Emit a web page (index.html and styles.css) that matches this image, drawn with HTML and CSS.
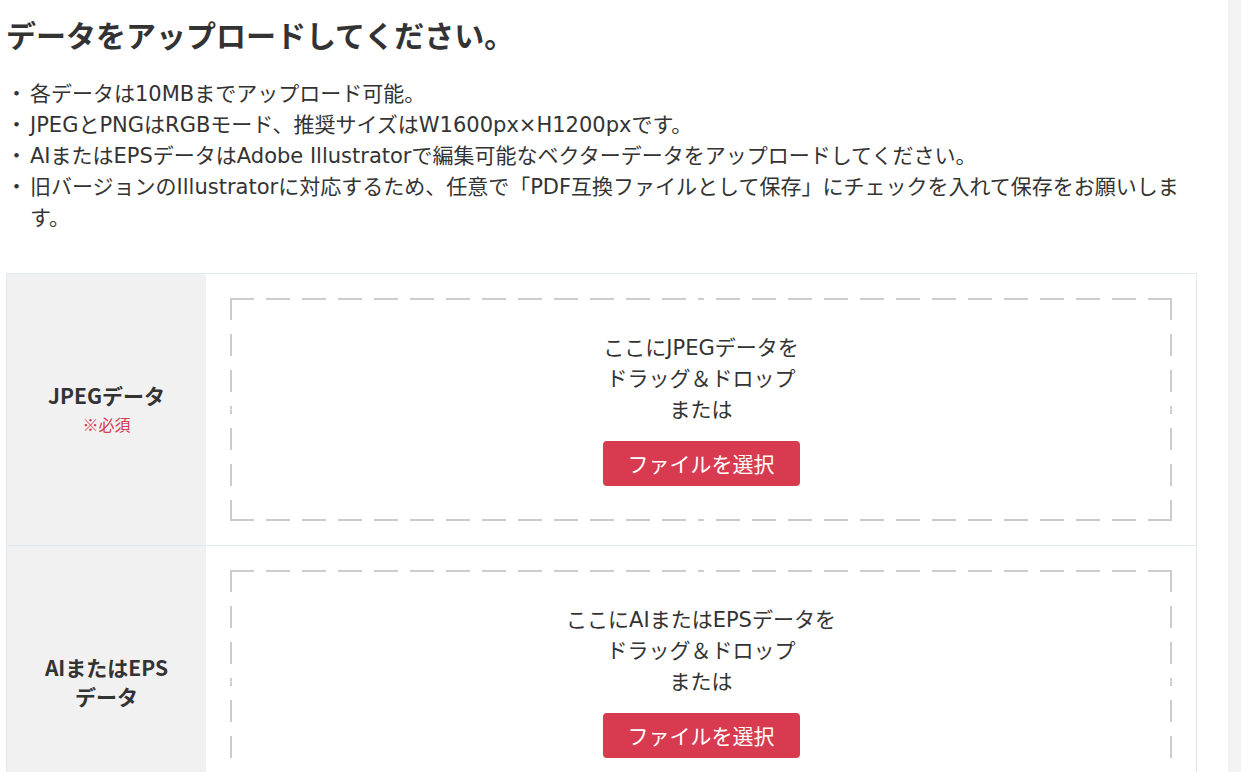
FILE: index.html
```html
<!DOCTYPE html>
<html lang="ja">
<head>
    <meta charset="UTF-8">
    <title>データアップロード</title>
    <link rel="stylesheet" href="styles.css">
</head>
<body>
    <div class="page">
        <main class="main">
            <h1 class="title">データをアップロードしてください。</h1>
            <ul class="notes">
                <li>各データは10MBまでアップロード可能。</li>
                <li>JPEGとPNGはRGBモード、推奨サイズはW1600px×H1200pxです。</li>
                <li>AIまたはEPSデータはAdobe Illustratorで編集可能なベクターデータをアップロードしてください。</li>
                <li>旧バージョンのIllustratorに対応するため、任意で「PDF互換ファイルとして保存」にチェックを入れて保存をお願いします。</li>
            </ul>

            <div class="upload-table">
                <div class="upload-row">
                    <div class="upload-label">
                        <span class="label-name">JPEGデータ</span>
                        <span class="required">※必須</span>
                    </div>
                    <div class="upload-cell">
                        <div class="dropzone" id="dropJpeg">
                            <p class="drop-text">ここにJPEGデータを<br>ドラッグ＆ドロップ<br>または</p>
                            <button type="button" class="select-btn">ファイルを選択</button>
                        </div>
                    </div>
                </div>
                <div class="upload-row">
                    <div class="upload-label">
                        <span class="label-name">AIまたはEPS<br>データ</span>
                    </div>
                    <div class="upload-cell">
                        <div class="dropzone" id="dropAi">
                            <p class="drop-text">ここにAIまたはEPSデータを<br>ドラッグ＆ドロップ<br>または</p>
                            <button type="button" class="select-btn">ファイルを選択</button>
                        </div>
                    </div>
                </div>
            </div>
        </main>
        <div class="side-strip"></div>
    </div>
</body>
</html>
```

FILE: styles.css
```css
html {
    overflow: hidden;
}
body {
    margin: 0;
    font-family: "DejaVu Sans", "Noto Sans CJK JP", sans-serif;
    color: #333;
    background: #fff;
}
.page {
    display: flex;
    min-height: 100vh;
}
.main {
    flex: 1;
    padding: 14px 31px 0 6px;
    min-width: 0;
}
.side-strip {
    width: 13px;
    background: #f3f3f3;
}
.title {
    margin: 0;
    font-family: "Noto Sans CJK JP", sans-serif;
    font-size: 30px;
    line-height: 40px;
    font-weight: bold;
    color: #333;
}
.notes {
    list-style: none;
    margin: 25px 0 0;
    padding: 0 0 0 24px;
    font-size: 21px;
    line-height: 31px;
}
.notes li {
    text-indent: -24px;
}
.notes li::before {
    content: "・";
    display: inline-block;
    width: 24px;
    text-indent: 0;
    text-align: left;
}
.upload-table {
    margin-top: 39px;
    border: 1px solid #e1e9ee;
    border-bottom: none;
}
.upload-row {
    display: flex;
    border-bottom: 1px solid #e1e9ee;
}
.upload-label {
    width: 139px;
    flex-shrink: 0;
    padding: 0 30px;
    background: #f1f1f1;
    display: flex;
    flex-direction: column;
    justify-content: center;
    align-items: center;
    text-align: center;
    font-family: "Noto Sans CJK JP", sans-serif;
}
.label-name {
    font-size: 21px;
    line-height: 29px;
    font-weight: bold;
}
.required {
    font-size: 16px;
    line-height: 29px;
    color: #d83b50;
}
.upload-cell {
    flex: 1;
    padding: 24px;
}
/* dashed frame, each half of an edge dashed from its own corner */
.dropzone {
    padding: 35px 0;
    text-align: center;
    background:
        repeating-linear-gradient(90deg, #ccc 0 24px, transparent 24px 36px) left top / 50% 2px no-repeat,
        repeating-linear-gradient(270deg, #ccc 0 24px, transparent 24px 36px) right top / 50% 2px no-repeat,
        repeating-linear-gradient(90deg, #ccc 0 24px, transparent 24px 36px) left bottom / 50% 2px no-repeat,
        repeating-linear-gradient(270deg, #ccc 0 24px, transparent 24px 36px) right bottom / 50% 2px no-repeat,
        repeating-linear-gradient(180deg, #ccc 0 22px, transparent 22px 36px) left top / 2px 50% no-repeat,
        repeating-linear-gradient(0deg, #ccc 0 22px, transparent 22px 36px) left bottom / 2px 50% no-repeat,
        repeating-linear-gradient(180deg, #ccc 0 22px, transparent 22px 36px) right top / 2px 50% no-repeat,
        repeating-linear-gradient(0deg, #ccc 0 22px, transparent 22px 36px) right bottom / 2px 50% no-repeat;
}
.drop-text {
    margin: 0 0 15px;
    font-size: 21px;
    line-height: 31px;
}
.select-btn {
    font-family: "Noto Sans CJK JP", sans-serif;
    font-size: 21px;
    line-height: 45px;
    padding: 0 25px;
    border: none;
    border-radius: 4px;
    background: #d83b50;
    color: #fff;
    cursor: pointer;
    vertical-align: top;
}
```
